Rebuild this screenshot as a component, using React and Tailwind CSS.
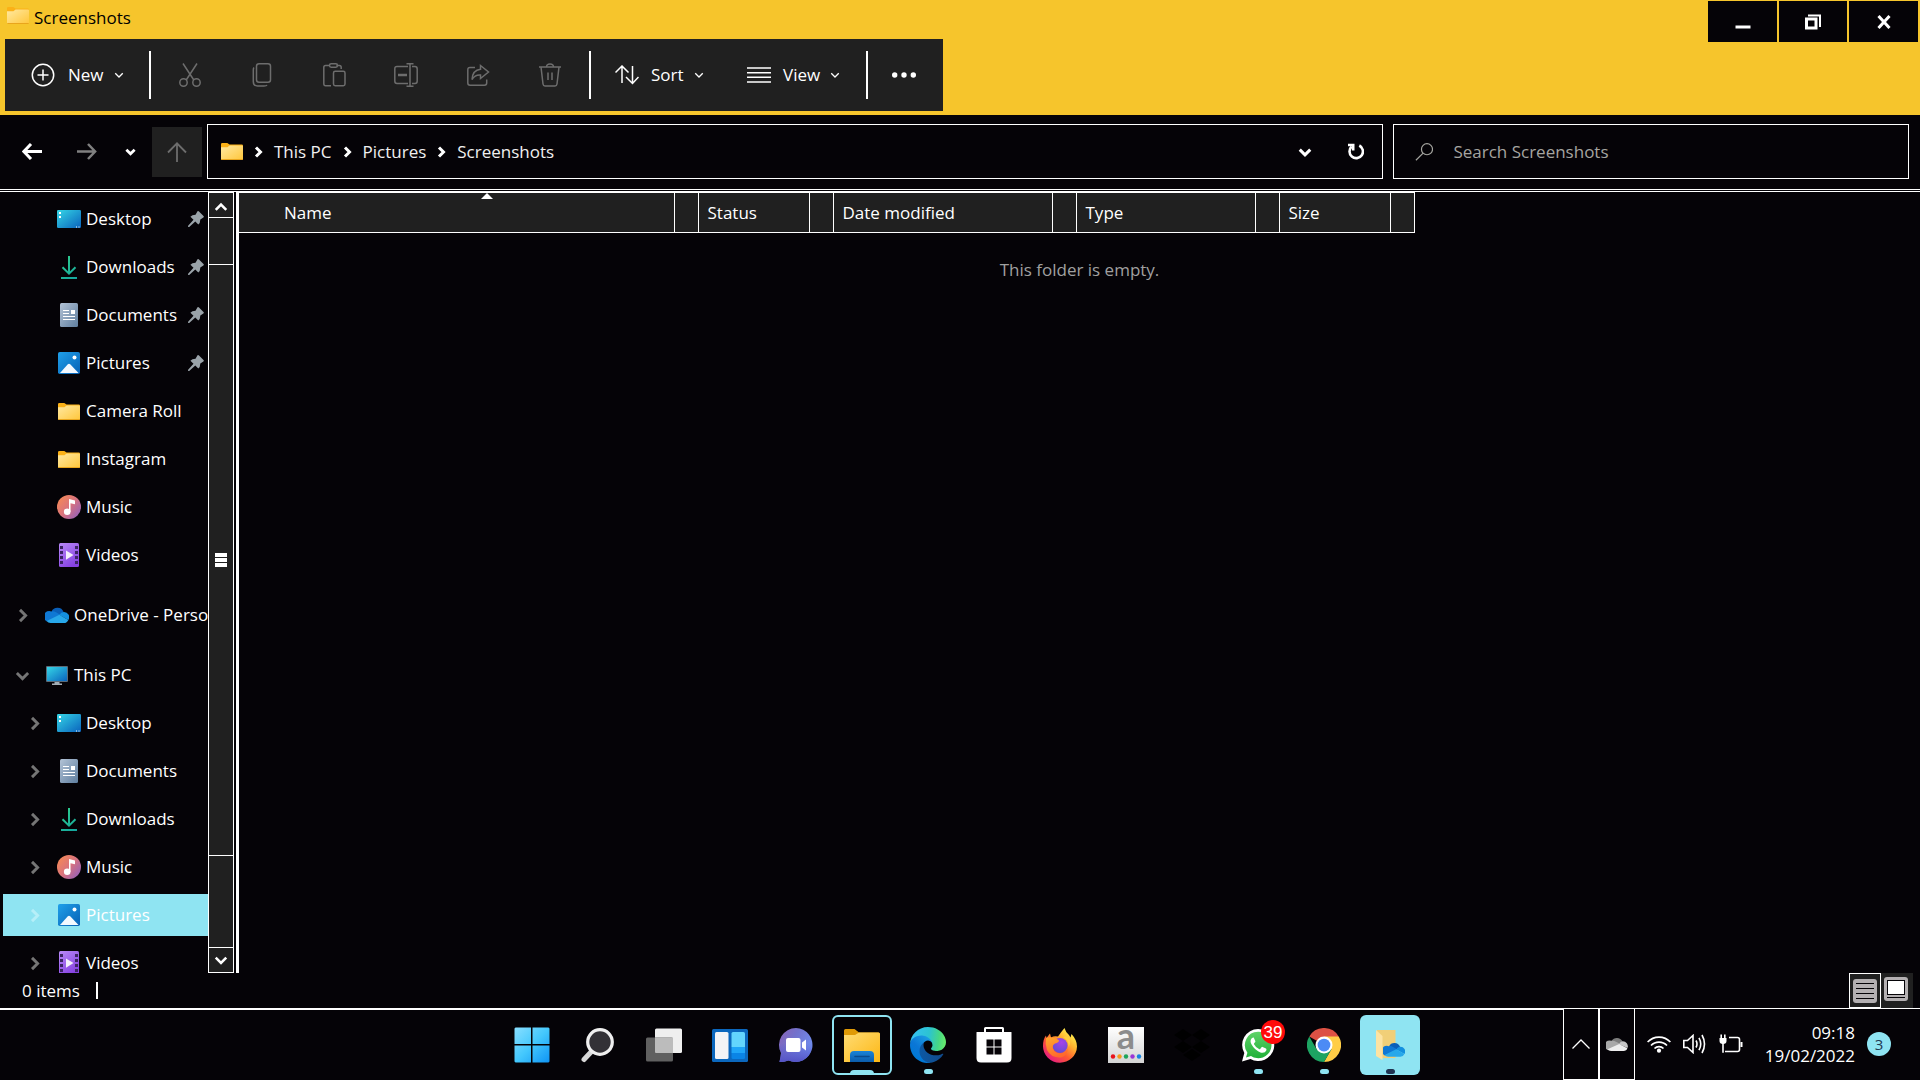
import React from 'react';

/* ---------- shared glyphs ---------- */

function Chevron({ dir = 'right', size = 12, stroke = 2, className = '' }) {
  const d = {
    right: 'M4 1.5 L8.5 6 L4 10.5',
    down: 'M1.5 4 L6 8.5 L10.5 4',
    up: 'M1.5 8.5 L6 4 L10.5 8.5',
  }[dir];
  return (
    <svg width={size} height={size} viewBox="0 0 12 12" fill="none" stroke="currentColor" strokeWidth={stroke} className={className} aria-hidden="true">
      <path d={d} />
    </svg>
  );
}

function FolderIcon({ className = 'w-[22px] h-[17px]' }) {
  return (
    <svg viewBox="0 0 22 17" className={className} aria-hidden="true">
      <defs>
        <linearGradient id="folderFront" x1="0" y1="0" x2="1" y2="1">
          <stop offset="0" stopColor="#ffe9a2" />
          <stop offset="1" stopColor="#ffc63a" />
        </linearGradient>
      </defs>
      <path d="M0 1.2Q0 0 1.2 0H6.3L8.5 1.6H20.8Q22 1.6 22 2.8V6H0Z" fill="#fbb117" />
      <path d="M0 4.2H6.4L8.6 2.4H21.2Q22 2.4 22 3.2V15.8Q22 17 20.8 17H1.2Q0 17 0 15.8Z" fill="url(#folderFront)" />
      <path d="M0.3 16.5H21.7" stroke="#e9a51c" />
    </svg>
  );
}

/* ---------- sidebar icons ---------- */

function DesktopIcon() {
  return (
    <svg width="24" height="18" viewBox="0 0 24 18" aria-hidden="true">
      <defs>
        <linearGradient id="desk" x1="0" y1="0" x2="1" y2="1">
          <stop offset="0" stopColor="#35d6e6" />
          <stop offset="1" stopColor="#0a63bd" />
        </linearGradient>
      </defs>
      <rect width="24" height="18" rx="1.2" fill="url(#desk)" />
      <path d="M2 2h2v2H2zM2 6h2v2H2zM19 16.5h1v1h-1zM21.5 16.5h1v1h-1z" fill="#fff" />
    </svg>
  );
}

function DownloadIcon() {
  return (
    <svg width="16" height="23" viewBox="0 0 16 23" fill="none" stroke="url(#dl)" strokeWidth="2" aria-hidden="true">
      <defs>
        <linearGradient id="dl" gradientUnits="userSpaceOnUse" x1="0" y1="0" x2="16" y2="23">
          <stop offset="0" stopColor="#2fd08a" />
          <stop offset="1" stopColor="#14a5a0" />
        </linearGradient>
      </defs>
      <path d="M8 0V18M1.5 11.2L8 17.7L14.5 11.2M0 22H16" />
    </svg>
  );
}

function DocumentIcon() {
  return (
    <svg width="18" height="24" viewBox="0 0 18 24" aria-hidden="true">
      <defs>
        <linearGradient id="doc" x1="0" y1="0" x2="1" y2="1">
          <stop offset="0" stopColor="#b3c3d6" />
          <stop offset="1" stopColor="#5f7e9f" />
        </linearGradient>
      </defs>
      <rect width="18" height="24" rx="1.5" fill="url(#doc)" />
      <path d="M3 7.5h6M3 10.5h6M3 13.5h12M3 16.5h12" stroke="#fff" />
      <rect x="11" y="7" width="4" height="4" fill="#fff" />
    </svg>
  );
}

function PictureIcon() {
  return (
    <svg width="22" height="22" viewBox="0 0 22 22" aria-hidden="true">
      <defs>
        <linearGradient id="pic" x1="0" y1="0" x2="1" y2="1">
          <stop offset="0" stopColor="#1fa0ea" />
          <stop offset="1" stopColor="#0761b5" />
        </linearGradient>
      </defs>
      <rect width="22" height="22" rx="1.8" fill="url(#pic)" />
      <path d="M2 21L9.8 12.3Q11 11.200 12.200 12.300L20.500 21Z" fill="#f3f9ff" />
      <circle cx="16.500" cy="5.500" r="2" fill="#fff" />
    </svg>
  );
}

function MusicIcon() {
  return (
    <svg width="24" height="24" viewBox="0 0 24 24" aria-hidden="true">
      <defs>
        <linearGradient id="mus" x1="0" y1="0.1" x2="1" y2="0.9">
          <stop offset="0" stopColor="#f98b52" />
          <stop offset="0.5" stopColor="#d9737e" />
          <stop offset="1" stopColor="#8e5fc0" />
        </linearGradient>
      </defs>
      <circle cx="12" cy="12" r="12" fill="url(#mus)" />
      <path d="M12 4L18 5.600V9.300L13.500 8.200V17H12Z" fill="#fff" />
      <circle cx="10.200" cy="16.800" r="3.300" fill="#fff" />
    </svg>
  );
}

function VideoIcon() {
  return (
    <svg width="20" height="24" viewBox="0 0 20 24" aria-hidden="true">
      <defs>
        <linearGradient id="vid" x1="0" y1="0" x2="0.6" y2="1">
          <stop offset="0" stopColor="#b98af8" />
          <stop offset="1" stopColor="#8642e2" />
        </linearGradient>
      </defs>
      <rect width="20" height="24" rx="1.500" fill="url(#vid)" />
      <path d="M1 3h3v3H1zM1 8h3v3H1zM1 13h3v3H1zM1 18h3v3H1zM16 3h3v3h-3zM16 8h3v3h-3zM16 13h3v3h-3zM16 18h3v3h-3z" fill="#3b2463" />
      <path d="M7 7.500L14.500 12L7 16.800Z" fill="#f4f0fb" />
    </svg>
  );
}

function OneDriveIcon({ className = 'w-6 h-4' }) {
  return (
    <svg viewBox="0 0 24 16" className={className} aria-hidden="true">
      <path d="M6.500 4.600A6.600 6.600 0 0 1 18.600 5L13 9.500Z" fill="#0a5fb8" />
      <path d="M6.500 4.400Q9 4 11 5.200L16 8.200L2 14.500A5.300 5.300 0 0 1 6.500 4.400Z" fill="#0f78d4" />
      <path d="M18.600 5A5.200 5.200 0 0 1 23.400 13L14.400 8Q16 5 18.600 5Z" fill="#1490df" />
      <path d="M14.400 7.700L23.300 12.900Q22 16 19 16H5.500Q3 16 1.700 14Z" fill="#28a8ea" />
    </svg>
  );
}

function PcIcon() {
  return (
    <svg width="22" height="19" viewBox="0 0 22 19" aria-hidden="true">
      <rect width="22" height="16" rx="1" fill="#5c6b78" />
      <rect x="1" y="1" width="20" height="14" fill="url(#desk)" />
      <path d="M8.500 16h5v1.500H16V19H6v-1.500h2.500z" fill="#a3adb5" />
    </svg>
  );
}

function PinIcon() {
  return (
    <svg width="16" height="16" viewBox="0 0 16 16" fill="#9aa3a9" aria-hidden="true">
      <path d="M9.500 0.300Q10.300 -0.300 11 0.500L15.500 5Q16.200 5.800 15.400 6.400L12.300 8.400Q12.300 12 10.300 13.500L7.300 10.500L1.200 15.900L0.100 15.900V14.800L5.500 8.700L2.400 5.700Q4 3.700 7.500 3.700Z" />
    </svg>
  );
}

const quickAccess = [
  { label: 'Desktop', Icon: DesktopIcon, pinned: true },
  { label: 'Downloads', Icon: DownloadIcon, pinned: true },
  { label: 'Documents', Icon: DocumentIcon, pinned: true },
  { label: 'Pictures', Icon: PictureIcon, pinned: true },
  { label: 'Camera Roll', Icon: FolderIcon },
  { label: 'Instagram', Icon: FolderIcon },
  { label: 'Music', Icon: MusicIcon },
  { label: 'Videos', Icon: VideoIcon },
];

const thisPc = [
  { label: 'Desktop', Icon: DesktopIcon },
  { label: 'Documents', Icon: DocumentIcon },
  { label: 'Downloads', Icon: DownloadIcon },
  { label: 'Music', Icon: MusicIcon },
  { label: 'Pictures', Icon: PictureIcon, selected: true },
  { label: 'Videos', Icon: VideoIcon },
];

function NavItem({ label, Icon, pinned, selected, chevron, root }) {
  return (
    <li className="flex h-12 items-center pl-[3px]">
      <button
        type="button"
        className={`flex h-[42px] w-full items-center whitespace-nowrap text-left ${root ? 'pl-3' : 'pl-6'} ${selected ? 'bg-[#8fe4f2]' : ''}`}
      >
        <span className={`w-[18px] shrink-0 ${selected ? 'text-[#b6eff8]' : 'text-[#757575]'}`}>
          {chevron && <Chevron dir={chevron} size={15} stroke={2.3} />}
        </span>
        <span className="ml-3 flex w-6 shrink-0 justify-center">
          <Icon />
        </span>
        <span className="ml-[5px] flex-1">{label}</span>
        {pinned && <span className="mr-1 shrink-0"><PinIcon /></span>}
      </button>
    </li>
  );
}

/* ---------- title bar and toolbar ---------- */

function WindowButton({ label, width = 'w-[69px]', children }) {
  return (
    <button type="button" aria-label={label} className={`flex h-[41px] items-center justify-center bg-[#050307] text-white ${width}`}>
      {children}
    </button>
  );
}

function ToolIcon({ label, children }) {
  return (
    <button type="button" aria-label={label} disabled className="flex h-12 w-[72px] items-center justify-center text-[#6d6d6d]">
      <svg width="24" height="24" viewBox="0 0 24 24" fill="none" stroke="currentColor" strokeWidth="1.500">
        {children}
      </svg>
    </button>
  );
}

function Toolbar() {
  return (
    <div className="ml-[5px] flex h-[72px] w-fit items-center bg-[#202020] pr-[25px] text-white">
      <button type="button" className="flex h-12 w-36 items-center pl-[26px] font-medium">
        <svg width="24" height="24" viewBox="0 0 24 24" fill="none" stroke="currentColor" strokeWidth="1.500" aria-hidden="true">
          <circle cx="12" cy="12" r="10.700" />
          <path d="M12 6.500V17.500M6.500 12H17.500" />
        </svg>
        <span className="ml-[13px]">New</span>
        <Chevron dir="down" size={10} stroke={1.6} className="ml-2.5" />
      </button>
      <span className="h-12 w-0.5 bg-white" />
      <div className="flex w-[438px] pl-[3px]">
        <ToolIcon label="Cut">
          <path d="M5 0.500L15.800 17M19 0.500L8.200 17" />
          <circle cx="5.500" cy="19.500" r="3.700" />
          <circle cx="18.500" cy="19.500" r="3.700" />
        </ToolIcon>
        <ToolIcon label="Copy">
          <rect x="6.500" y="0.800" width="14" height="18.500" rx="2.500" />
          <path d="M4 4.500Q3.300 5.200 3.300 7V18.500Q3.300 22.900 7.500 22.900H14Q16.500 22.900 17 22" />
        </ToolIcon>
        <ToolIcon label="Paste">
          <path d="M8 2.500H3.500Q1.800 2.500 1.800 4.500V20.500Q1.800 22.800 3.500 22.800H9M14.500 2.500H17.500Q19.200 2.500 19.200 4.500V6" />
          <rect x="7.500" y="0.800" width="8" height="3.500" rx="1.700" />
          <rect x="11.500" y="8.200" width="11.500" height="14.600" rx="1.700" />
        </ToolIcon>
        <ToolIcon label="Rename">
          <path d="M14 3.500H3Q0.800 3.500 0.800 6V18Q0.800 20.500 3 20.500H14M18 3.500H21Q23.200 3.500 23.200 6V18Q23.200 20.500 21 20.500H18" />
          <path d="M16 1V23M12.500 0.800H19.500M12.500 23.200H19.500" />
          <path d="M4 12H13" strokeWidth="2.500" />
        </ToolIcon>
        <ToolIcon label="Share">
          <path d="M9 4.500H4Q1.800 4.500 1.800 7V20Q1.800 22.200 4 22.200H18.500Q20.700 22.200 20.700 20V16.500" />
          <path d="M14.500 2.500L22.500 9L14.500 15.500V12Q9 11.500 6 16.500Q6.500 7 14.500 6.200Z" />
        </ToolIcon>
        <ToolIcon label="Delete">
          <path d="M1 4H23M8.500 4Q8.500 0.900 12 0.900T15.500 4M3 4L5 21Q5.300 23 7 23H17Q18.700 23 19 21L21 4M10 9.500V17M14 9.500V17" />
        </ToolIcon>
      </div>
      <span className="h-12 w-0.5 bg-white" />
      <button type="button" className="flex h-12 w-[132px] items-center pl-6 font-medium">
        <svg width="24" height="20" viewBox="0 0 24 20" fill="none" stroke="currentColor" strokeWidth="1.500" aria-hidden="true">
          <path d="M7 18V1M0.500 7.500L7 1L13.500 7.500M17.500 1V18.500M11 12L17.500 18.500L23.500 12" />
        </svg>
        <span className="ml-3">Sort</span>
        <Chevron dir="down" size={10} stroke={1.6} className="ml-2.5" />
      </button>
      <button type="button" className="flex h-12 w-[143px] items-center pl-6 font-medium">
        <svg width="24" height="16" viewBox="0 0 24 16" stroke="currentColor" strokeWidth="1.500" aria-hidden="true">
          <path d="M0 1H24M0 5.700H24M0 10.300H24M0 15H24" />
        </svg>
        <span className="ml-3">View</span>
        <Chevron dir="down" size={10} stroke={1.6} className="ml-2.5" />
      </button>
      <span className="h-12 w-0.5 bg-white" />
      <button type="button" aria-label="See more" className="ml-[22px] flex h-12 w-7 items-center justify-center">
        <svg width="24" height="6" viewBox="0 0 24 6" fill="currentColor">
          <circle cx="2.700" cy="3" r="2.700" />
          <circle cx="12" cy="3" r="2.700" />
          <circle cx="21.300" cy="3" r="2.700" />
        </svg>
      </button>
    </div>
  );
}

function TitleBar() {
  return (
    <header className="flex h-[115px] shrink-0 justify-between bg-[#f6c52c] text-black">
      <div>
        <div className="flex h-[39px] items-start gap-[5px] pl-[7px] pt-[7px]">
          <FolderIcon className="h-[17px] w-[22px]" />
          <h1 className="leading-[22px]">Screenshots</h1>
        </div>
        <Toolbar />
      </div>
      <div className="flex gap-0.5 pr-0.5 pt-px">
        <WindowButton label="Minimise">
          <svg width="16" height="14" viewBox="0 0 16 14"><path d="M0.500 10.500H15.500V13.500H0.500Z" fill="#fff" /></svg>
        </WindowButton>
        <WindowButton label="Restore" width="w-[68px]">
          <svg width="16" height="16" viewBox="0 0 16 16" fill="none" stroke="#fff">
            <rect x="1.500" y="5" width="9.500" height="9" strokeWidth="3" />
            <path d="M3 1.500H15V13" strokeWidth="2" />
          </svg>
        </WindowButton>
        <WindowButton label="Close">
          <svg width="14" height="14" viewBox="0 0 14 14" stroke="#fff" strokeWidth="3"><path d="M1.500 1L12.500 13M12.500 1L1.500 13" /></svg>
        </WindowButton>
      </div>
    </header>
  );
}

/* ---------- address row ---------- */

function AddressRow() {
  return (
    <div className="flex h-[74px] shrink-0 items-center pb-px pr-[11px]">
      <nav className="flex shrink-0 items-center" aria-label="History">
        <button type="button" aria-label="Back" className="ml-5 flex h-10 w-6 items-center justify-center text-white">
          <svg width="20" height="17" viewBox="0 0 20 17" fill="none" stroke="currentColor" strokeWidth="3"><path d="M20 8.500H2M9 1L1.900 8.500L9 16" /></svg>
        </button>
        <button type="button" aria-label="Forward" disabled className="ml-[31px] flex h-10 w-6 items-center justify-center text-[#808080]">
          <svg width="20" height="17" viewBox="0 0 20 17" fill="none" stroke="currentColor" strokeWidth="2.500"><path d="M0 8.500H18M11 1L18.100 8.500L11 16" /></svg>
        </button>
        <button type="button" aria-label="Recent locations" className="ml-[21px] flex h-10 w-5 items-center justify-center text-white">
          <Chevron dir="down" size={11} stroke={3} />
        </button>
        <button type="button" aria-label="Up" disabled className="ml-3 flex h-[50px] w-[50px] items-center justify-center bg-[#202020] text-[#6d6d6d]">
          <svg width="20" height="20" viewBox="0 0 20 20" fill="none" stroke="currentColor" strokeWidth="1.800"><path d="M10 20V1.500M1 10.500L10 1.300L19 10.500" /></svg>
        </button>
      </nav>
      <div className="ml-[5px] flex h-[55px] flex-[1161] items-center border border-white pl-[13px] text-[#f0f0f0]">
        <FolderIcon />
        <ol className="flex items-center">
          {['This PC', 'Pictures', 'Screenshots'].map((part) => (
            <li key={part} className="flex items-center">
              <Chevron size={12} stroke={3} className="ml-[9px] mr-2.5 text-white" />
              <a href="#">{part}</a>
            </li>
          ))}
        </ol>
        <button type="button" aria-label="Previous locations" className="ml-auto flex h-10 w-10 items-center justify-center text-white">
          <Chevron dir="down" size={14} stroke={2.6} />
        </button>
        <button type="button" aria-label="Refresh" className="ml-2.5 mr-[7px] flex h-10 w-10 items-center justify-center text-white">
          <svg width="17" height="17" viewBox="0 0 17 17" fill="none" stroke="currentColor" strokeWidth="2.600">
            <path d="M12.300 2.500A6.700 6.700 0 1 1 4.700 3.500" />
            <path d="M1 2H6.200V7.500" />
          </svg>
        </button>
      </div>
      <label className="ml-2.5 flex h-[55px] flex-[493] items-center border border-white pl-[21px] text-[#a5a5a0]">
        <svg width="20" height="20" viewBox="0 0 20 20" fill="none" stroke="currentColor" strokeWidth="1.300" aria-hidden="true">
          <circle cx="13" cy="7" r="6" />
          <path d="M8.800 11.200L1 19" />
        </svg>
        <input type="text" aria-label="Search Screenshots" placeholder="Search Screenshots" className="ml-5 w-full bg-transparent outline-none placeholder:text-[#a5a5a0]" />
      </label>
    </div>
  );
}

/* ---------- sidebar and file list ---------- */

function ScrollBar() {
  return (
    <div className="flex w-[26px] shrink-0 flex-col border border-white bg-[#202020] text-white">
      <button type="button" aria-label="Scroll up" className="flex h-[25px] items-center justify-center border-b border-white pt-1">
        <Chevron dir="up" size={14} stroke={2.2} />
      </button>
      <div className="flex-[46]" />
      <div className="flex flex-[590] flex-col items-center justify-center gap-px border-y border-white">
        <span className="h-1 w-3 bg-white" />
        <span className="h-1 w-3 bg-white" />
        <span className="h-1 w-3 bg-white" />
      </div>
      <div className="flex-[91]" />
      <button type="button" aria-label="Scroll down" className="flex h-[25px] items-center justify-center border-t border-white">
        <Chevron dir="down" size={14} stroke={2.2} />
      </button>
    </div>
  );
}

function Sidebar() {
  return (
    <aside className="flex shrink-0">
      <nav className="relative w-[208px] overflow-hidden" aria-label="Folders">
        <div className="absolute inset-x-0 top-0 pt-[3px]">
          <ul>
            {quickAccess.map((item) => (
              <NavItem key={item.label} {...item} />
            ))}
          </ul>
          <ul className="mt-3">
            <NavItem label="OneDrive - Perso" Icon={OneDriveIcon} chevron="right" root />
          </ul>
          <ul className="mt-3">
            <NavItem label="This PC" Icon={PcIcon} chevron="down" root />
            {thisPc.map((item) => (
              <NavItem key={item.label} {...item} chevron="right" />
            ))}
          </ul>
        </div>
      </nav>
      <ScrollBar />
      <div className="ml-0.5 w-[3px] bg-white" />
    </aside>
  );
}

function FileList() {
  return (
    <main className="min-w-0 flex-1">
      <table className="h-[41px] table-fixed border-collapse border-y border-white bg-[#202020] text-left">
        <colgroup>
          <col className="w-[435px]" /><col className="w-6" />
          <col className="w-[111px]" /><col className="w-6" />
          <col className="w-[219px]" /><col className="w-6" />
          <col className="w-[179px]" /><col className="w-6" />
          <col className="w-[111px]" /><col className="w-6" />
        </colgroup>
        <thead>
          <tr className="text-white">
            <th className="relative border-r border-white pl-[45px] font-normal" aria-sort="ascending">
              Name
              <svg width="12" height="6" viewBox="0 0 12 6" className="absolute right-[181px] top-0" aria-hidden="true"><path d="M6 0L12 6H0Z" fill="#fff" /></svg>
            </th>
            <td className="border-x border-white" />
            <th className="border-x border-white pl-[9px] font-normal">Status</th>
            <td className="border-x border-white" />
            <th className="border-x border-white pl-[9px] font-normal">Date modified</th>
            <td className="border-x border-white" />
            <th className="border-x border-white pl-[9px] font-normal">Type</th>
            <td className="border-x border-white" />
            <th className="border-x border-white pl-[9px] font-normal">Size</th>
            <td className="border-x border-white" />
          </tr>
        </thead>
      </table>
      <p className="mt-[25px] text-center text-[#a0a0a0]">This folder is empty.</p>
    </main>
  );
}

function StatusBar() {
  return (
    <footer className="flex h-[35px] shrink-0 items-center pl-[22px] pr-[7px] text-white">
      <span>0 items</span>
      <span className="ml-4 h-[17px] w-0.5 bg-white" />
      <div className="ml-auto flex h-full">
        <button type="button" aria-label="Details view" className="flex w-8 items-center justify-center border border-white bg-[#202020]">
          <svg width="24" height="24" viewBox="0 0 24 24">
            <rect width="24" height="24" rx="3" fill="#b4b0b2" />
            <path d="M3 4.500H21M3 9.500H21M3 14.500H21M3 19.500H21" stroke="#050307" strokeWidth="1.200" />
          </svg>
        </button>
        <button type="button" aria-label="Large icons view" className="flex w-8 bg-[#202020] pl-[3px] pt-1">
          <svg width="24" height="24" viewBox="0 0 24 24">
            <rect width="24" height="24" rx="3" fill="#b4b0b2" />
            <rect x="3.500" y="3.500" width="17" height="14" fill="#fff" stroke="#050307" />
            <path d="M3 20.500H21" stroke="#050307" />
          </svg>
        </button>
      </div>
    </footer>
  );
}

/* ---------- taskbar ---------- */

const StartLogo = () => (
  <svg width="36" height="36" viewBox="0 0 36 36">
    <defs>
      <linearGradient id="win" x1="0" y1="0" x2="36" y2="36" gradientUnits="userSpaceOnUse">
        <stop offset="0" stopColor="#8be0ff" /><stop offset="0.5" stopColor="#44c8fd" /><stop offset="1" stopColor="#0d93f4" />
      </linearGradient>
    </defs>
    <path d="M1.500 0.500H17V17H0.500V1.500ZM18.500 0.500H34.500L35.500 1.500V17H18.500ZM0.500 18.500H17V35.500H1.500L0.500 34.500ZM18.500 18.500H35.500V34.500L34.500 35.500H18.500Z" fill="url(#win)" />
  </svg>
);

const SearchLogo = () => (
  <svg width="34" height="36" viewBox="0 0 34 36">
    <path d="M3 32.500L11 24" stroke="#d8d8d8" strokeWidth="5" strokeLinecap="round" />
    <circle cx="19" cy="15" r="12.300" fill="#333136" stroke="#efefef" strokeWidth="3.200" />
  </svg>
);

const TaskViewLogo = () => (
  <svg width="36" height="34" viewBox="0 0 36 34">
    <rect x="9" y="0.500" width="27" height="24.500" rx="1.500" fill="#efefef" />
    <rect x="0" y="9.500" width="27" height="24" rx="1.500" fill="#606060" />
    <path d="M9 9.500H27V25H10Q9 25 9 24Z" fill="#bcbcbc" />
  </svg>
);

const WidgetsLogo = () => (
  <svg width="36" height="33" viewBox="0 0 36 33">
    <rect width="36" height="33" rx="1.500" fill="#0b67bd" />
    <rect x="3" y="3" width="13.500" height="27" rx="1.500" fill="#f4f4f6" />
    <path d="M19.500 4.500Q19.500 3 21 3H31.500Q33 3 33 4.500V18H19.500Z" fill="#63d5fd" />
    <path d="M19.500 18H33V24H19.500Z" fill="#1fa5f8" />
    <path d="M19.500 24H33V28.500Q33 30 31.500 30H21Q19.500 30 19.500 28.500Z" fill="#0a84e6" />
  </svg>
);

const ChatLogo = () => (
  <svg width="34" height="34" viewBox="0 0 34 34">
    <defs>
      <linearGradient id="chat" x1="0" y1="0" x2="1" y2="0.600">
        <stop offset="0" stopColor="#8c62b4" /><stop offset="0.450" stopColor="#7272cc" /><stop offset="1" stopColor="#6f8ff0" />
      </linearGradient>
      <linearGradient id="chatShade" x1="0" y1="0" x2="0" y2="1">
        <stop offset="0.450" stopColor="#5a5ad0" stopOpacity="0" /><stop offset="1" stopColor="#5452c4" />
      </linearGradient>
    </defs>
    <path d="M17 0A17 17 0 1 1 9.500 32.500Q5 34 0.500 34Q1.500 29 2 25A17 17 0 0 1 17 0Z" fill="url(#chat)" />
    <path d="M17 0A17 17 0 1 1 9.500 32.500Q5 34 0.500 34Q1.500 29 2 25A17 17 0 0 1 17 0Z" fill="url(#chatShade)" />
    <rect x="7" y="10" width="14.500" height="14" rx="2" fill="#fff" />
    <path d="M23 14.500L27 11.500V22.500L23 19.500Z" fill="#fff" />
  </svg>
);

const ExplorerLogo = () => (
  <svg width="36" height="33" viewBox="0 0 36 33">
    <defs>
      <linearGradient id="expl" x1="0" y1="0" x2="1" y2="1">
        <stop offset="0" stopColor="#ffdc74" /><stop offset="1" stopColor="#fdb714" />
      </linearGradient>
      <linearGradient id="explBlue" x1="0" y1="0" x2="0" y2="1">
        <stop offset="0" stopColor="#1a84d8" /><stop offset="1" stopColor="#0b5cab" />
      </linearGradient>
    </defs>
    <path d="M0 1.500Q0 0 1.500 0H10.500L15 3.500H34.500Q36 3.500 36 5V10H0Z" fill="#e09a06" />
    <path d="M0 6H11L15 3.500H34.500Q36 3.500 36 5V33H0Z" fill="url(#expl)" />
    <path d="M6 33V26Q6 22 10 22H26Q30 22 30 26V33Z" fill="url(#explBlue)" />
    <path d="M11 27.500H25" stroke="#0a4a8c" strokeWidth="1.600" strokeLinecap="round" />
  </svg>
);

const EdgeLogo = () => (
  <svg width="36" height="36" viewBox="0 0 256 256">
    <defs>
      <linearGradient id="edgeA" x1="63" y1="177" x2="241" y2="177" gradientUnits="userSpaceOnUse">
        <stop offset="0" stopColor="#0c59a4" /><stop offset="1" stopColor="#114a8b" />
      </linearGradient>
      <linearGradient id="edgeB" x1="157" y1="100" x2="46" y2="221" gradientUnits="userSpaceOnUse">
        <stop offset="0" stopColor="#1b9de2" /><stop offset="0.600" stopColor="#0b76d6" /><stop offset="1" stopColor="#0078d4" />
      </linearGradient>
      <linearGradient id="edgeC" x1="10" y1="70" x2="250" y2="100" gradientUnits="userSpaceOnUse">
        <stop offset="0" stopColor="#35c1f1" /><stop offset="0.500" stopColor="#2cc3d2" /><stop offset="0.800" stopColor="#45d786" /><stop offset="1" stopColor="#66eb6e" />
      </linearGradient>
    </defs>
    <path d="M231 190.500c-3.400 1.800-6.900 3.400-10.500 4.700-11.500 4.300-23.700 6.500-36 6.500-47.400 0-88.700-32.600-88.700-74.500.1-11.400 6.400-21.900 16.400-27.300-42.900 1.800-53.900 46.500-53.900 72.700 0 74 68.200 81.600 82.900 81.600 7.900 0 19.800-2.300 27-4.600l1.300-.4c27.600-9.500 51-28.100 66.600-52.800 1.200-1.900.6-4.300-1.200-5.500-1.200-.8-2.700-.8-3.900-.4z" fill="url(#edgeA)" />
    <path d="M105.700 241.400c-8.900-5.500-16.600-12.800-22.700-21.300-26.300-36-18.400-86.500 17.600-112.800 3.800-2.700 7.700-5.200 11.900-7.200 3.100-1.500 8.400-4.100 15.500-4 10.100.1 19.600 4.900 25.700 13 4 5.400 6.300 11.900 6.400 18.700 0-.2 24.500-79.600-80-79.600C36.200 48.200.1 89.900.1 126.500c-.2 19.300 4 38.500 12.100 56 27.600 58.800 94.800 87.600 156.400 67.100-21.100 6.600-44.100 3.700-62.900-8.200z" fill="url(#edgeB)" />
    <path d="M152.300 148.900c-.8 1-3.300 2.500-3.300 5.700 0 2.600 1.700 5.100 4.700 7.200 14.400 10 41.500 8.700 41.600 8.700 10.700 0 21.100-2.900 30.300-8.300 18.800-11 30.400-31.100 30.400-52.900.3-22.400-8-37.300-11.300-43.900C223.500 23.900 177.700 0 128 0 58-.1.900 56.200 0 126.200c.5-36.500 36.800-66 80-66 3.500 0 23.500.3 42 10.100 16.300 8.600 24.900 18.900 30.800 29.200 6.200 10.700 7.300 24.100 7.300 29.500s-2.700 13.300-7.800 19.900z" fill="url(#edgeC)" />
  </svg>
);

const StoreLogo = () => (
  <svg width="36" height="36" viewBox="0 0 36 36">
    <path d="M9 6V1.500Q9 1 9.500 1H26.500Q27 1 27 1.500V6" fill="none" stroke="#fff" strokeWidth="2" />
    <path d="M0.500 5.500Q0.500 5 1 5H35Q35.500 5 35.500 5.500V31Q35.500 35.500 31 35.500H5Q0.500 35.500 0.500 31Z" fill="#fff" />
    <path d="M10.500 12.500H17.500V19.500H10.500ZM18.500 12.500H25.500V19.500H18.500ZM10.500 20.500H17.500V27.500H10.500ZM18.500 20.500H25.500V27.500H18.500Z" fill="#050307" />
  </svg>
);

const FirefoxLogo = () => (
  <svg width="34" height="35" viewBox="0 0 34 35">
    <defs>
      <linearGradient id="ffBody" x1="0.850" y1="0.100" x2="0.150" y2="0.950">
        <stop offset="0" stopColor="#fff44f" /><stop offset="0.300" stopColor="#ffb02e" /><stop offset="0.600" stopColor="#ff5a30" /><stop offset="1" stopColor="#e4158a" />
      </linearGradient>
      <radialGradient id="ffCore" cx="0.600" cy="0.300" r="0.800">
        <stop offset="0" stopColor="#a643e8" /><stop offset="1" stopColor="#5a4ecf" />
      </radialGradient>
      <linearGradient id="ffFace" x1="0" y1="0" x2="0.400" y2="1">
        <stop offset="0" stopColor="#ffab2c" /><stop offset="1" stopColor="#ff6a2c" />
      </linearGradient>
    </defs>
    <path d="M21.500 0Q22.500 4 26 7L27.500 9.500L28.500 6Q34 12 34 18.500A17 16.500 0 0 1 0 18Q0 11 3 7.500L3.500 10L7 5.500L8 9.500Q11 7.500 15 8.500Q18 4 21.500 0Z" fill="url(#ffBody)" />
    <circle cx="17" cy="17.500" r="7.600" fill="url(#ffCore)" />
    <path d="M3 10Q7 8.500 10.500 10Q13.500 9.700 16 12.500Q16 14.500 12 15.500Q9 17 10 20.500Q11.500 25 17 25.500Q23 25 24.700 20Q25.500 27 18 29.500Q8 30 4 22Q2 16 3 10Z" fill="url(#ffFace)" />
    <path d="M20 9Q26 12 25.500 19Q28 15 26.500 10Q24 7 20 9Z" fill="#ffcf3f" />
  </svg>
);

const AlexaLogo = () => (
  <span className="relative flex h-9 w-9 flex-col items-center bg-gradient-to-b from-white to-[#d4d4d4]">
    <span className="h-[25px] font-['Lato','Open_Sans',sans-serif] text-[36px] font-bold leading-[17px] text-[#8c8c8c]">a</span>
    <svg width="32" height="5" viewBox="0 0 32 5" className="mt-0.5">
      <circle cx="3" cy="2.500" r="2.200" fill="#e8121b" />
      <circle cx="9.500" cy="2.500" r="2.200" fill="#f79a1c" />
      <circle cx="16" cy="2.500" r="2.200" fill="#1ea55a" />
      <circle cx="22.500" cy="2.500" r="2.200" fill="#9a35d6" />
      <circle cx="29" cy="2.500" r="2.200" fill="#1583e0" />
    </svg>
  </span>
);

const DropboxLogo = () => (
  <svg width="36" height="32" viewBox="0 0 36 32" fill="#000000">
    <path d="M9 0L18 6L9 12L0 6ZM27 0L36 6L27 12L18 6ZM9 12L18 18L9 24L0 18ZM27 12L36 18L27 24L18 18ZM9 26L18 20L27 26L18 32Z" />
  </svg>
);

const WhatsAppLogo = () => (
  <span className="relative">
    <svg width="34" height="34" viewBox="0 0 34 34">
      <defs>
        <linearGradient id="wa" x1="0" y1="0" x2="0" y2="1"><stop offset="0" stopColor="#5fd368" /><stop offset="1" stopColor="#20b038" /></linearGradient>
      </defs>
      <path d="M17 1A16 16 0 1 1 9.500 31L1 33.500L3.300 25A16 16 0 0 1 17 1Z" fill="#fff" />
      <path d="M17 3.800A13.200 13.200 0 1 1 10 28L5 29.500L6.400 24.700A13.200 13.200 0 0 1 17 3.800Z" fill="url(#wa)" />
      <path d="M12.700 9.500Q11.900 9.300 11 10.100Q8.500 12.500 10.300 16Q13.800 22.500 20 24.700Q24 25.500 25.300 22.500Q25.800 21 25 20.500L21.600 18.900Q21 18.700 20.500 19.300L19.200 21Q18.700 21.400 18 21Q14.700 19.500 13 16.300Q12.800 15.700 13.200 15.200L14.200 13.900Q14.500 13.400 14.300 12.900Z" fill="#fff" />
    </svg>
    <span className="absolute -right-2.5 -top-2 flex h-6 w-6 items-center justify-center rounded-full bg-[#ff0a0a] font-['Liberation_Sans',Arial,sans-serif] text-[17px] leading-none text-white">39</span>
  </span>
);

const ChromeLogo = () => (
  <svg width="34" height="34" viewBox="0 0 48 48">
    <path d="M24 24L3.200 12A24 24 0 0 1 44.800 12Z" fill="#dd5144" />
    <path d="M24 12H44.800A24 24 0 0 1 24 48L34.400 30Z" fill="#ffcd46" />
    <path d="M13.600 30L3.200 12A24 24 0 0 0 24 48L34.400 30Z" fill="#1da462" />
    <circle cx="24" cy="24" r="12" fill="#fff" />
    <circle cx="24" cy="24" r="9" fill="#4c8bf5" />
  </svg>
);

const OneDriveFolderLogo = () => (
  <span className="relative h-[30px] w-7">
    <svg width="28" height="30" viewBox="0 0 28 30">
      <path d="M1 0H19.500V28H5Z" fill="#f1cf78" />
      <path d="M0 0L6.500 6V30L0 26Z" fill="#fde3a2" />
    </svg>
    <OneDriveIcon className="absolute left-[7px] top-3 h-[15px] w-[22px]" />
  </span>
);

const apps = [
  { name: 'Start', Logo: StartLogo },
  { name: 'Search', Logo: SearchLogo },
  { name: 'Task view', Logo: TaskViewLogo },
  { name: 'Widgets', Logo: WidgetsLogo },
  { name: 'Chat', Logo: ChatLogo },
  { name: 'File Explorer', Logo: ExplorerLogo, tile: 'border-2 border-[#8fe4f2]', mark: 'absolute -bottom-px h-1 w-6 rounded-t bg-[#8fe4f2]' },
  { name: 'Microsoft Edge', Logo: EdgeLogo, mark: 'absolute bottom-px h-[5px] w-[9px] rounded-full bg-[#8fe4f2]' },
  { name: 'Microsoft Store', Logo: StoreLogo },
  { name: 'Firefox', Logo: FirefoxLogo },
  { name: 'Amazon Alexa', Logo: AlexaLogo },
  { name: 'Dropbox', Logo: DropboxLogo },
  { name: 'WhatsApp', Logo: WhatsAppLogo, mark: 'absolute bottom-px h-[5px] w-[9px] rounded-full bg-[#8fe4f2]' },
  { name: 'Chrome', Logo: ChromeLogo, mark: 'absolute bottom-px h-[5px] w-[9px] rounded-full bg-[#8fe4f2]' },
  { name: 'OneDrive folder', Logo: OneDriveFolderLogo, tile: 'bg-[#8fe4f2]', mark: 'absolute bottom-px h-[5px] w-[9px] rounded-full bg-[#1f3350]' },
];

function Taskbar() {
  return (
    <footer className="grid h-[72px] shrink-0 grid-cols-[1fr_auto_1fr] text-white">
      <div className="border-t-2 border-white" />
      <div className="flex items-center gap-1.5 border-t-2 border-white pl-0.5">
        {apps.map(({ name, Logo, tile = '', mark }) => (
          <button key={name} type="button" aria-label={name} className={`relative flex h-[60px] w-[60px] items-center justify-center rounded-md ${tile}`}>
            <Logo />
            {mark && <span className={mark} />}
          </button>
        ))}
      </div>
      <div className="flex">
        <div className="flex-1 border-t-2 border-white" />
        <button type="button" aria-label="Show hidden icons" className="flex w-9 items-center justify-center border border-white">
          <svg width="18" height="10" viewBox="0 0 18 10" fill="none" stroke="#fff" strokeWidth="1.300"><path d="M0.500 9.500L9 1L17.500 9.500" /></svg>
        </button>
        <button type="button" aria-label="OneDrive" className="flex w-9 items-center justify-center border border-white">
          <svg width="22" height="14" viewBox="0 0 22 14">
            <path d="M5.500 4A6.300 6.300 0 0 1 16.500 4.300L12 9Z" fill="#7d7d7d" />
            <path d="M5.500 3.800Q8 3.500 10 4.700L15 7.300L1.800 13A4.800 4.800 0 0 1 5.500 3.800Z" fill="#a8a8a8" />
            <path d="M16.500 4.300A5 5 0 0 1 21.500 11L13 7.200Q14.500 4.500 16.500 4.300Z" fill="#c6c6c6" />
            <path d="M13.200 6.900L21.400 11.300Q20.500 14 17.500 14H5Q2.500 14 1.500 12.300Z" fill="#ededed" />
          </svg>
        </button>
        <div className="flex items-center gap-3 border-t border-white pb-0.5 pl-3 pr-[29px]">
          <svg width="24" height="18" viewBox="0 0 24 18" fill="none" stroke="#fff" strokeWidth="1.700" role="img" aria-label="Wi-Fi">
            <path d="M0.600 7A15.600 15.600 0 0 1 23.400 7M4 10.500A11 11 0 0 1 20 10.500M7.500 13.500A6.200 6.200 0 0 1 16.500 13.500" />
            <circle cx="12" cy="15.700" r="2.100" fill="#fff" stroke="none" />
          </svg>
          <svg width="24" height="20" viewBox="0 0 24 20" fill="none" stroke="#fff" strokeWidth="1.600" role="img" aria-label="Volume">
            <path d="M0.800 6.500H4.500L10 1.500V18.500L4.500 13.500H0.800ZM13 6.500Q15 10 13 13.500M16 3.800Q19.500 10 16 16.200M19 1Q24 10 19 19" />
          </svg>
          <svg width="24" height="20" viewBox="0 0 24 20" fill="none" stroke="#fff" strokeWidth="1.600" role="img" aria-label="Battery charging">
            <path d="M0.500 4H7.500V7Q7.500 10 4 10Q0.500 10 0.500 7Z" fill="#fff" stroke="none" />
            <path d="M2.200 0.500V4M5.800 0.500V4M4 9V18.700M6 17.500H18.500Q20.500 17.500 20.500 15.500V5.500Q20.500 3.500 18.500 3.500H10" />
            <path d="M21.500 8H23.500V13H21.500Z" fill="#fff" stroke="none" />
          </svg>
          <time className="ml-2.5 text-right leading-[23px]" dateTime="2022-02-19T09:18">
            09:18<br />19/02/2022
          </time>
          <button type="button" aria-label="3 notifications" className="flex h-6 w-6 items-center justify-center rounded-full bg-[#8fe4f2] text-[15px] text-[#1f3a52]">
            3
          </button>
        </div>
      </div>
    </footer>
  );
}

export default function App() {
  return (
    <div className="flex h-screen flex-col overflow-hidden bg-[#050307] font-['Open_Sans','Noto_Sans',sans-serif] text-[17px] leading-6 text-white">
      <TitleBar />
      <AddressRow />
      <div className="h-[3px] shrink-0 border-y border-white" />
      <div className="flex min-h-0 flex-1">
        <Sidebar />
        <FileList />
      </div>
      <StatusBar />
      <Taskbar />
    </div>
  );
}
